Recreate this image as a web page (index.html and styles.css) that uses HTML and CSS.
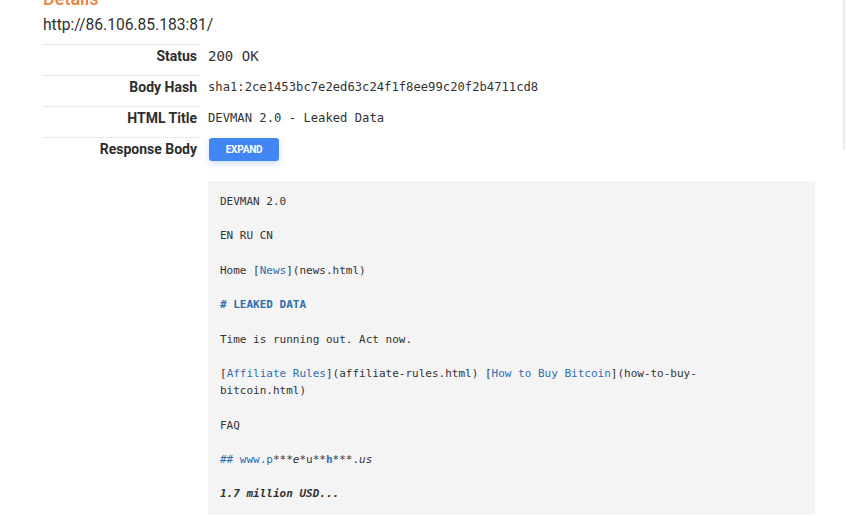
FILE: index.html
```html
<!DOCTYPE html>
<html>
<head>
<meta charset="utf-8">
<link rel="stylesheet" href="styles.css">
</head>
<body>
<div class="page">
  <h3 class="section-title">Details</h3>
  <div class="url">http://86.106.85.183:81/</div>
  <div class="rows">
    <div class="row">
      <div class="label">Status</div>
      <div class="value value-status">200&nbsp;OK</div>
    </div>
    <div class="row">
      <div class="label">Body Hash</div>
      <div class="value">sha1:2ce1453bc7e2ed63c24f1f8ee99c20f2b4711cd8</div>
    </div>
    <div class="row">
      <div class="label">HTML Title</div>
      <div class="value">DEVMAN 2.0 - Leaked Data</div>
    </div>
    <div class="row">
      <div class="label">Response Body</div>
      <div class="value"><button class="expand">EXPAND</button></div>
    </div>
  </div>
<pre class="body">DEVMAN 2.0

EN RU CN

Home [<span class="link">News</span>](news.html)

<span class="h1"># LEAKED DATA</span>

Time is running out. Act now.

[<span class="link">Affiliate Rules</span>](affiliate-rules.html) [<span class="link">How to Buy Bitcoin</span>](how-to-buy-
bitcoin.html)

FAQ

<span class="h2">## www.p</span>***<em>e</em>*u**<span class="h2 strong">h</span>***.<em>us</em>

<strong><em>1.7 million USD...</em></strong>
</pre>
</div>
<div class="edge"></div>
</body>
</html>
```
FILE: styles.css
```css
html, body {
  margin: 0;
  padding: 0;
  background: #ffffff;
  overflow: hidden;
}
body {
  font-family: Roboto, "Liberation Sans", sans-serif;
  color: #333333;
  width: 847px;
  height: 516px;
  position: relative;
}
.page {
  padding-left: 43px;
}
.section-title {
  margin: -11px 0 0 0;
  font-size: 18px;
  line-height: 20px;
  font-weight: 500;
  color: #e8843f;
}
.url {
  margin-top: 6px;
  font-size: 15.6px;
  line-height: 20px;
  color: #2f2f2f;
}
.rows {
  margin-top: 9px;
}
.row {
  display: flex;
  height: 31px;
}
.label {
  width: 154px;
  padding-right: 3px;
  border-top: 1px dotted #d6d6d6;
  text-align: right;
  font-weight: 700;
  font-size: 14px;
  line-height: 18px;
  padding-top: 2px;
  color: #2d2d2d;
}
.value {
  padding-left: 8px;
  padding-top: 3px;
  font-family: "DejaVu Sans Mono", "Liberation Mono", monospace;
  font-size: 12.2px;
  line-height: 18px;
  color: #333;
}
.value-status {
  font-size: 14px;
}
.expand {
  margin-top: -2px;
  margin-left: 1px;
  width: 70px;
  height: 23px;
  border: none;
  border-radius: 3px;
  background: #4285f4;
  color: #ffffff;
  font-family: Roboto, "Liberation Sans", sans-serif;
  font-weight: 700;
  font-size: 10px;
  letter-spacing: -0.2px;
  box-shadow: 0 3px 6px rgba(66, 133, 244, 0.25);
  padding: 0;
}
.body {
  margin: 13px 0 0 165px;
  width: 583px;
  padding: 12px 12px 12px 12px;
  background: #f4f4f4;
  font-family: "DejaVu Sans Mono", "Liberation Mono", monospace;
  font-size: 11px;
  line-height: 17.2px;
  color: #333333;
  white-space: pre;
}
.link {
  color: #2f6fb0;
}
.h1 {
  color: #2f6fb0;
  font-weight: 700;
}
.h2 {
  color: #2f6fb0;
}
.strong {
  font-weight: 700;
}
.edge {
  position: absolute;
  top: 0;
  right: 2px;
  width: 2px;
  height: 150px;
  background: #ececec;
}
```
